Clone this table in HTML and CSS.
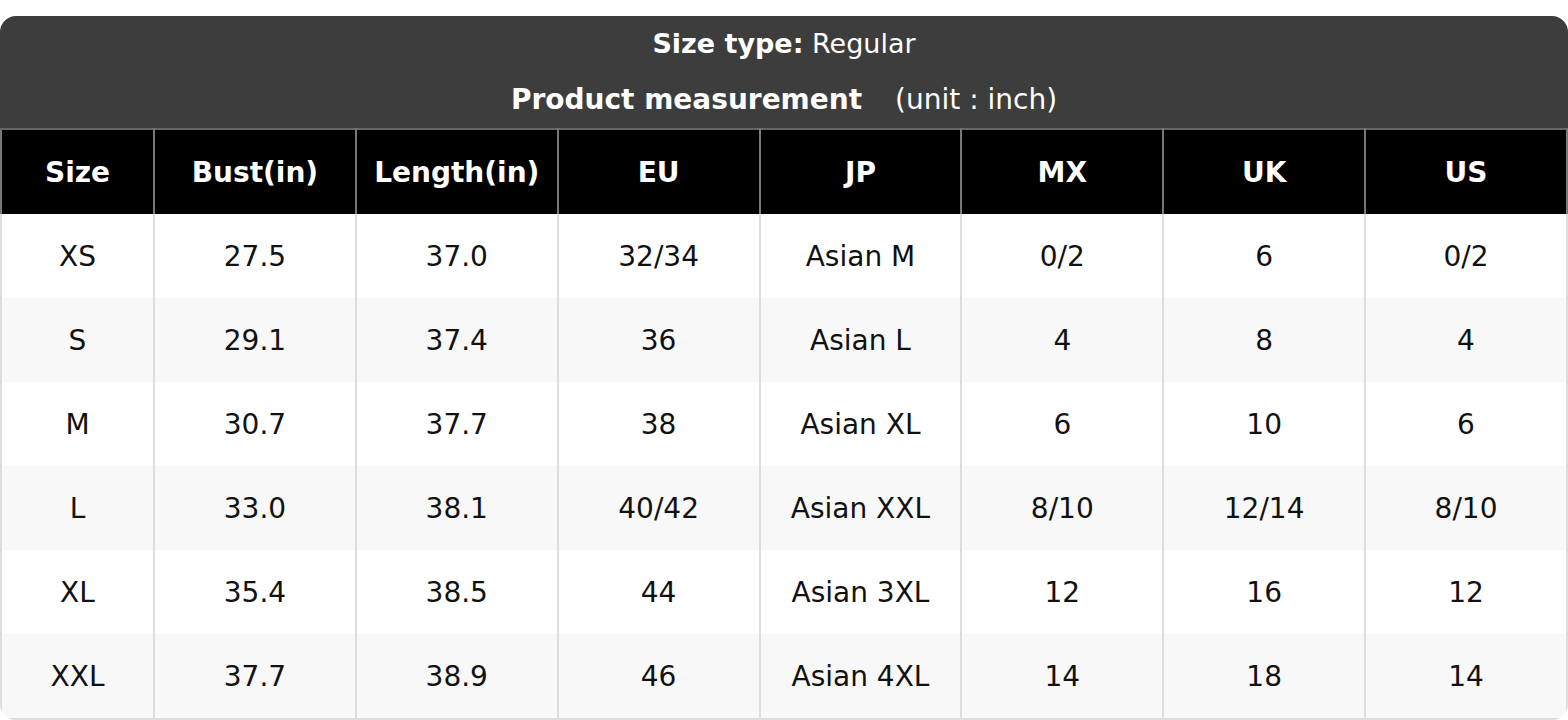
FILE: index.html
```html
<!DOCTYPE html>
<html lang="en">
<head>
<meta charset="utf-8">
<title>Size chart</title>
<link rel="stylesheet" href="styles.css">
</head>
<body>
<div class="card">
  <div class="caption">
    <div class="caption-line line-type"><b>Size type:</b> Regular</div>
    <div class="caption-line line-measure"><b>Product measurement</b><span class="unit">(unit : inch)</span></div>
  </div>
  <table class="chart">
    <colgroup>
      <col class="col-size">
      <col><col><col><col><col><col><col>
    </colgroup>
    <thead>
      <tr><th>Size</th><th>Bust(in)</th><th>Length(in)</th><th>EU</th><th>JP</th><th>MX</th><th>UK</th><th>US</th></tr>
    </thead>
    <tbody>
      <tr><td>XS</td><td>27.5</td><td>37.0</td><td>32/34</td><td>Asian M</td><td>0/2</td><td>6</td><td>0/2</td></tr>
      <tr><td>S</td><td>29.1</td><td>37.4</td><td>36</td><td>Asian L</td><td>4</td><td>8</td><td>4</td></tr>
      <tr><td>M</td><td>30.7</td><td>37.7</td><td>38</td><td>Asian XL</td><td>6</td><td>10</td><td>6</td></tr>
      <tr><td>L</td><td>33.0</td><td>38.1</td><td>40/42</td><td>Asian XXL</td><td>8/10</td><td>12/14</td><td>8/10</td></tr>
      <tr><td>XL</td><td>35.4</td><td>38.5</td><td>44</td><td>Asian 3XL</td><td>12</td><td>16</td><td>12</td></tr>
      <tr><td>XXL</td><td>37.7</td><td>38.9</td><td>46</td><td>Asian 4XL</td><td>14</td><td>18</td><td>14</td></tr>
    </tbody>
  </table>
</div>
</body>
</html>
```

FILE: styles.css
```css
html, body {
  margin: 0;
  padding: 0;
  background: #ffffff;
}
body {
  padding-top: 16px;
  font-family: "DejaVu Sans", "Liberation Sans", sans-serif;
  font-size: 28px;
  color: #111111;
}
.card {
  width: 1568px;
  border-radius: 16px;
  overflow: hidden;
  box-sizing: border-box;
}
.caption {
  background: #3d3d3d;
  color: #ffffff;
  text-align: center;
  height: 112px;
}
.caption-line {
  height: 56px;
  line-height: 56px;
}
.line-type {
  font-size: 27px;
}
.line-measure {
  font-size: 28px;
}
.caption-line b {
  font-weight: bold;
}
.unit {
  margin-left: 33px;
}
.chart {
  width: 100%;
  border-collapse: collapse;
  table-layout: fixed;
  border-left: 2px solid #dddddd;
  border-right: 2px solid #dddddd;
  border-bottom: 2px solid #dddddd;
}
.col-size {
  width: 153px;
}
.chart th {
  background: #000000;
  color: #ffffff;
  font-weight: bold;
  height: 84px;
  padding: 0;
  border-top: 2px solid #666666;
  border-left: 2px solid #777777;
  border-right: 2px solid #777777;
  text-align: center;
  vertical-align: middle;
}
.chart td {
  height: 84px;
  padding: 0;
  text-align: center;
  vertical-align: middle;
  border-left: 2px solid #dddddd;
  border-right: 2px solid #dddddd;
}
.chart tbody tr:nth-child(even) td {
  background: #f8f8f8;
}
```
